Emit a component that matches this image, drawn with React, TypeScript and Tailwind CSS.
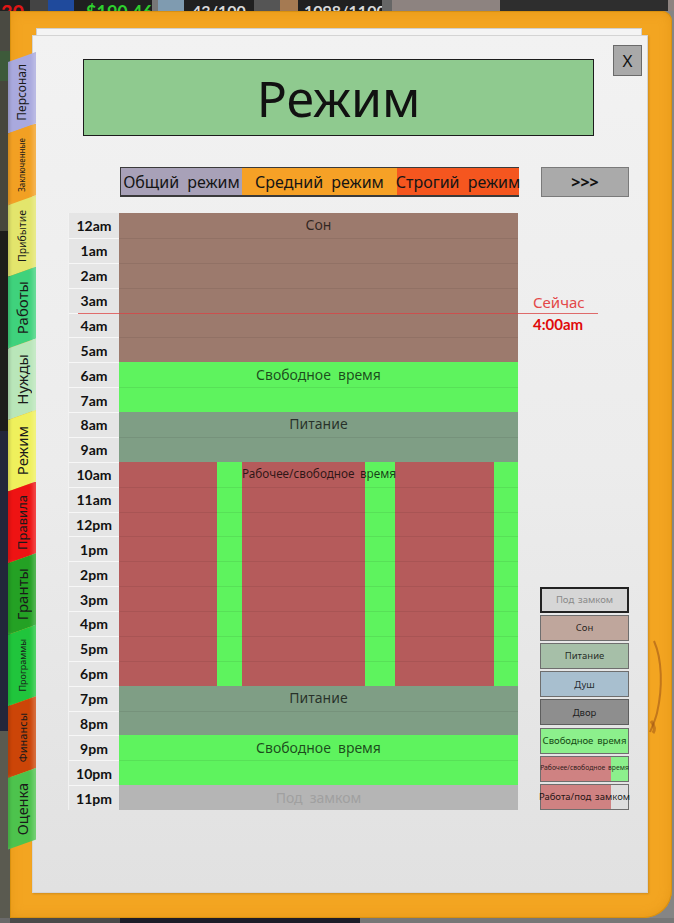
import React from 'react';

const ROW = 'h-[24.875px]';

const times = ['12am','1am','2am','3am','4am','5am','6am','7am','8am','9am','10am','11am','12pm','1pm','2pm','3pm','4pm','5pm','6pm','7pm','8pm','9pm','10pm','11pm'];

const tabs = [
  { t: 'Персонал', bg: 'bg-[#a9a9de]', size: 'text-[12px]' },
  { t: 'Заключенные', bg: 'bg-[#f2a023]', size: 'text-[8px]' },
  { t: 'Прибытие', bg: 'bg-[#e3e56c]', size: 'text-[10.5px]' },
  { t: 'Работы', bg: 'bg-[#3fd27c]', size: 'text-[15px]' },
  { t: 'Нужды', bg: 'bg-[#b9e6b9]', size: 'text-[15px]' },
  { t: 'Режим', bg: 'bg-[#eff05c]', size: 'text-[15px]' },
  { t: 'Правила', bg: 'bg-[#ee1313]', size: 'text-[13px]' },
  { t: 'Гранты', bg: 'bg-[#24a124]', size: 'text-[15px]' },
  { t: 'Программы', bg: 'bg-[#20c53c]', size: 'text-[9px]' },
  { t: 'Финансы', bg: 'bg-[#cc4508]', size: 'text-[11px]' },
  { t: 'Оценка', bg: 'bg-[#4dc34d]', size: 'text-[14.5px]' },
];

function Rows({ n, label, textCls }: { n: number; label?: string; textCls?: string }) {
  return (
    <>
      {Array.from({ length: n }).map((_, i) => (
        <div
          key={i}
          className={`${ROW} flex items-center justify-center ${i > 0 ? 'border-t border-black/[0.07]' : ''}`}
        >
          {i === 0 && label ? (
            <span className={`text-[14px] leading-none whitespace-nowrap [word-spacing:0.25em] ${textCls ?? 'text-black/70'}`}>{label}</span>
          ) : null}
        </div>
      ))}
    </>
  );
}

function Block({ n, bg, label, textCls }: { n: number; bg: string; label?: string; textCls?: string }) {
  return (
    <div className={`flex flex-col ${bg}`}>
      <Rows n={n} label={label} textCls={textCls} />
    </div>
  );
}

function WorkCol({ w, bg, label }: { w: string; bg: string; label?: boolean }) {
  return (
    <div className={`flex flex-col ${w} ${bg}`}>
      {Array.from({ length: 9 }).map((_, i) => (
        <div key={i} className={`${ROW} flex items-center ${i > 0 ? 'border-t border-black/[0.07]' : ''}`}>
          {i === 0 && label ? (
            <span className="relative z-10 text-[11.75px] leading-none whitespace-nowrap text-black/75 [word-spacing:0.2em]">
              Рабочее/свободное время
            </span>
          ) : null}
        </div>
      ))}
    </div>
  );
}

function Legend() {
  const base = 'h-[26px] flex items-center justify-center leading-none whitespace-nowrap [word-spacing:0.15em]';
  return (
    <div className="ml-[22px] w-[89px] flex flex-col justify-end gap-[2.2px]">
      <div className={`${base} bg-[#d6d6d6] border-2 border-[#222] text-[9.5px] text-[#8a8a8a]`}>Под замком</div>
      <div className={`${base} bg-[#bfa69c] border border-[#6e6e6e] text-[9.5px] text-black/80`}>Сон</div>
      <div className={`${base} bg-[#a6bfa8] border border-[#6e6e6e] text-[9.5px] text-black/80`}>Питание</div>
      <div className={`${base} bg-[#a8bfcf] border border-[#6e6e6e] text-[9.5px] text-black/80`}>Душ</div>
      <div className={`${base} bg-[#8e8e8e] border border-[#5e5e5e] text-[9.5px] text-black/80`}>Двор</div>
      <div className={`${base} bg-[#8cf08c] border border-[#6e6e6e] text-[9.5px] text-[#134a13]`}>Свободное время</div>
      <div className={`${base} bg-linear-to-r from-[#cf8282] from-80% to-[#8cf08c] to-80% border border-[#6e6e6e] text-[6.8px] text-black/80`}>
        Рабочее/свободное время
      </div>
      <div className={`${base} bg-linear-to-r from-[#cf8282] from-80% to-[#dedede] to-80% border border-[#6e6e6e] text-[9.5px] text-black/85`}>
        Работа/под замком
      </div>
    </div>
  );
}

function Tabs() {
  return (
    <div className="relative z-10 w-[28px] -ml-[2px] pt-[41px] flex flex-col shrink-0">
      {tabs.map((tab, i) => (
        <div
          key={tab.t}
          className={`${tab.bg} h-[81.6px] ${i > 0 ? '-mt-[10px]' : ''} flex items-center justify-center [clip-path:polygon(0_10px,100%_0,100%_calc(100%_-_10px),0_100%)] shadow-[inset_-3px_0_4px_rgba(255,255,255,0.25),inset_2px_0_3px_rgba(0,0,0,0.15)]`}
        >
          <span className={`[writing-mode:vertical-rl] rotate-180 ${tab.size} leading-none text-[#1a1a1a] whitespace-nowrap`}>{tab.t}</span>
        </div>
      ))}
    </div>
  );
}

function Hud() {
  return (
    <div className="h-[11px] shrink-0 flex overflow-hidden bg-[#3a3a3a] font-['Lato',sans-serif] font-bold">
      <div className="w-[30px] bg-[#1f1f1f] pt-[2px] pl-[1px] text-[20px] leading-none text-[#e01515]">30</div>
      <div className="w-[18px] bg-[#444]" />
      <div className="w-[26px] bg-[#1f4a9c]" />
      <div className="w-[78px] bg-[#202020] pt-[3px] pl-[12px] text-[18px] leading-none text-[#2ed02e] whitespace-nowrap">$190,460</div>
      <div className="w-[6px] bg-[#777]" />
      <div className="w-[26px] bg-[#7f9bb0]" />
      <div className="w-[70px] bg-[#202020] pt-[3px] pl-[8px] text-[16px] leading-none text-[#d8d8d8] whitespace-nowrap">43/100</div>
      <div className="w-[26px] bg-[#555]" />
      <div className="w-[18px] bg-[#a57a52]" />
      <div className="w-[84px] bg-[#202020] pt-[3px] pl-[6px] text-[16px] leading-none text-[#d8d8d8] whitespace-nowrap">1098/1100</div>
      <div className="w-[10px] bg-[#666]" />
      <div className="w-[108px] bg-[#8d8380]" />
      <div className="w-[168px] bg-[#2e2e2e]" />
      <div className="flex-1 bg-[#8d8380]" />
    </div>
  );
}

export default function App() {
  return (
    <div className="w-[674px] h-[923px] flex flex-col overflow-hidden bg-[#2a2a2a] font-['Noto_Sans',sans-serif]">
      <Hud />
      <div className="flex-1 min-h-0 flex bg-[#858585]">
        <div className="w-[10px] shrink-0 flex flex-col bg-[#2b2b26]">
          <div className="h-[40px] bg-[#4a4a42]" />
          <div className="h-[30px] bg-[#3d5a3a]" />
          <div className="h-[150px] bg-[#46463c]" />
          <div className="h-[200px] bg-[#1d1d1a]" />
          <div className="h-[300px] bg-[#22263a]" />
          <div className="flex-1 bg-[#5a5a50]" />
        </div>
        <div className="relative flex-1 mr-[2px] flex bg-[#f3a521] rounded-tr-[10px] rounded-br-[28px] shadow-[inset_0_0_0_1px_#d8900f,inset_0_0_12px_rgba(200,120,0,0.35)]">
          <Tabs />
          <div className="relative mt-[24px] mb-[25px] -ml-[4px] w-[616px] flex flex-col bg-linear-to-b from-[#f2f2f2] via-[#ececec] to-[#e1e1e1] border border-[#d4d4d4] shadow-[-1px_-12px_0_-6px_#f4f4f4,-1px_-12px_0_-5px_#cfcfcf,1px_1px_2px_rgba(0,0,0,0.15)]">
            {/* header */}
            <div className="flex items-start">
              <div className="ml-[50px] mt-[23px] w-[511px] h-[77px] bg-[#8fca8f] border border-[#1c1c1c] flex items-center justify-center text-[50px] leading-none text-[#111]">
                Режим
              </div>
              <div className="ml-[19px] mt-[9px] w-[29px] h-[31px] bg-[#a9a9a9] border border-[#6a6a6a] flex items-center justify-center text-[17px] leading-none text-[#111]">
                X
              </div>
            </div>
            {/* regime tabs */}
            <div className="mt-[31px] ml-[87px] flex items-start">
              <div className="flex h-[30px] border-t border-l border-b-2 border-[#3a3a3a] text-[16px] leading-none text-[#151515] [word-spacing:0.25em] whitespace-nowrap">
                <div className="w-[121px] bg-[#a8a1b8] flex items-center justify-center">Общий режим</div>
                <div className="w-[155px] bg-[#f6a126] flex items-center justify-center">Средний режим</div>
                <div className="w-[122px] bg-[#f5561f] flex items-center justify-center">Строгий режим</div>
              </div>
              <div className="ml-[22px] w-[88px] h-[30px] bg-[#aaaaaa] border border-[#7a7a7a] flex items-center justify-center text-[16px] font-bold leading-none text-[#111]">
                &gt;&gt;&gt;
              </div>
            </div>
            {/* grid */}
            <div className="relative mt-[16px] ml-[35px] flex">
              <div className="w-[51px] flex flex-col border-l border-[#f2f2f2] font-['Lato',sans-serif] font-bold text-[14px] text-[#111]">
                {times.map((t, i) => (
                  <div key={t} className={`${ROW} bg-[#e5e5e5] flex items-center justify-center ${i > 0 ? 'border-t border-[#f7f7f7]' : ''}`}>
                    {t}
                  </div>
                ))}
              </div>
              <div className="w-[399px] flex flex-col">
                <Block n={6} bg="bg-[#9c7a6d]" label="Сон" />
                <Block n={2} bg="bg-[#5ef35e]" label="Свободное время" />
                <Block n={2} bg="bg-[#7f9e85]" label="Питание" />
                <div className="flex">
                  <WorkCol w="w-[98px]" bg="bg-[#b55b5b]" />
                  <WorkCol w="w-[25px]" bg="bg-[#5ef35e]" />
                  <WorkCol w="w-[123px]" bg="bg-[#b55b5b]" label />
                  <WorkCol w="w-[30px]" bg="bg-[#5ef35e]" />
                  <WorkCol w="w-[99px]" bg="bg-[#b55b5b]" />
                  <WorkCol w="w-[24px]" bg="bg-[#5ef35e]" />
                </div>
                <Block n={2} bg="bg-[#7f9e85]" label="Питание" />
                <Block n={2} bg="bg-[#5ef35e]" label="Свободное время" />
                <Block n={1} bg="bg-[#b5b5b5]" label="Под замком" textCls="text-[#a0a0a0]" />
              </div>
              <Legend />
              {/* now marker */}
              <div className="absolute left-[10px] top-[99.5px] w-[520px] h-px bg-[#d94848]/80" />
              <div className="absolute left-[465px] top-[82px] text-[15px] leading-none text-[#e34848]">Сейчас</div>
              <div className="absolute left-[465px] top-[103.5px] text-[15px] leading-none font-bold text-[#e00a0a] font-['Lato',sans-serif]">4:00am</div>
            </div>
          </div>
          {/* coffee stain */}
          <svg className="absolute right-[6px] top-[628px]" width="18" height="95" viewBox="0 0 18 95">
            <path d="M6 2 C 14 20, 15 48, 9 74 C 7 82, 4 88, 2 93" stroke="#a85d18" strokeWidth="2" fill="none" opacity="0.65" />
            <path d="M3 82 C 6 86, 8 90, 5 94" stroke="#9a5014" strokeWidth="3" fill="none" opacity="0.5" />
          </svg>
        </div>
      </div>
      <div className="h-[5px] shrink-0 flex bg-[#2a2a2a]">
        <div className="w-[10px] bg-[#6a6a6a]" />
        <div className="w-[110px] bg-[#4a4a4a]" />
        <div className="w-[240px] bg-[#1c1c28]" />
        <div className="flex-1 bg-[#777]" />
      </div>
    </div>
  );
}
